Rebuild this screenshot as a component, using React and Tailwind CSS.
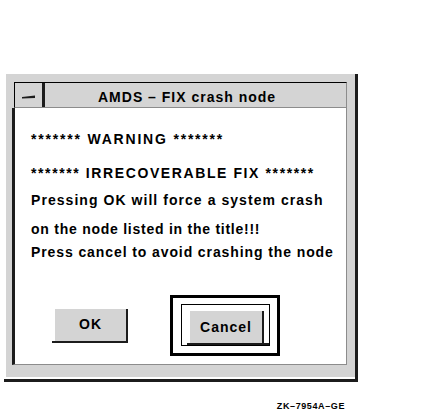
import React from 'react';

const FONT = { fontFamily: '"Liberation Sans", Arial, Helvetica, sans-serif' };

function PushButton({ label, w }) {
  // flat grey face with a dark drop edge on the right and bottom
  return (
    <div className="flex flex-col">
      <div className={`${w} h-[32px] bg-[#d4d4d4] border-r-2 border-[#1c1c1c] flex items-center justify-center text-[14px] font-bold tracking-[1px] text-black`}>
        {label}
      </div>
      <div className="h-[2px] -ml-[3px] bg-[#1c1c1c]" />
    </div>
  );
}

export default function App() {
  const lines = [
    ['mt-[23px]', '******* WARNING *******', 'tracking-[1.8px]'],
    ['mt-[18px]', '******* IRRECOVERABLE FIX *******', 'tracking-[1.6px]'],
    ['mt-[11px]', 'Pressing OK will force a system crash', 'tracking-[1.05px]'],
    ['mt-[13px]', 'on the node listed in the title!!!', 'tracking-[0.75px]'],
    ['mt-[7px]', 'Press cancel to avoid crashing the node', 'tracking-[0.9px]'],
  ];

  return (
    <div className="w-[432px] h-[416px] bg-white overflow-hidden" style={FONT}>
      {/* dialog with drop shadow */}
      <div className="ml-[4px] mt-[74px] w-[354px] h-[308px] border-r-[3px] border-b-[3px] border-[#1c1c1c]">
        <div className="ml-[2px] mt-[2px] w-[349px] h-[303px] bg-[#d4d4d4] pt-[8px] pl-[6px]">
          <div className="w-[335px]">
            {/* title bar */}
            <div className="ml-[2px] h-[26px] border-t border-l border-black border-b border-b-[#8c8c8c] border-r border-r-[#8c8c8c] flex">
              <div className="w-[27px] h-full flex items-center justify-center pt-[3px]">
                <svg width="14" height="4" viewBox="0 0 14 4">
                  <polygon points="0,2 13,0.5 13,3 0,3.5" fill="#1c1c1c" />
                </svg>
              </div>
              <div className="w-[3px] h-full bg-[#1c1c1c]" />
              <div className="flex-1 pl-[53px] pt-[6px] text-[14px] leading-[16px] font-bold tracking-[1px] text-black whitespace-nowrap">
                AMDS – FIX crash node
              </div>
            </div>
            {/* body */}
            <div className="h-[257px] bg-white border-l-[3px] border-l-[#1c1c1c] border-r border-r-[#8c8c8c] border-b border-b-[#8c8c8c] flex flex-col">
              <div className="pl-[16px]">
                {lines.map(([m, t, tr]) => (
                  <div key={t} className={`${m} h-[16px] text-[14px] leading-[16px] font-bold ${tr} text-black whitespace-nowrap`}>
                    {t}
                  </div>
                ))}
              </div>
              <div className="mt-[35px] flex items-center">
                <div className="ml-[40px]">
                  <PushButton label="OK" w="w-[73px]" />
                </div>
                <div className="ml-[42px] w-[110px] h-[61px] border-[3px] border-black pt-[6px] pl-[8px]">
                  <div className="w-[89px] h-[42px] border border-black pt-[6px] pl-[8px]">
                    <PushButton label="Cancel" w="w-[74px]" />
                  </div>
                </div>
              </div>
            </div>
          </div>
        </div>
      </div>
      {/* figure tag */}
      <div className="mt-[19px] flex justify-end pr-[87px]">
        <div className="text-[9px] leading-[10px] font-bold tracking-[0.6px] text-black">ZK–7954A–GE</div>
      </div>
    </div>
  );
}
